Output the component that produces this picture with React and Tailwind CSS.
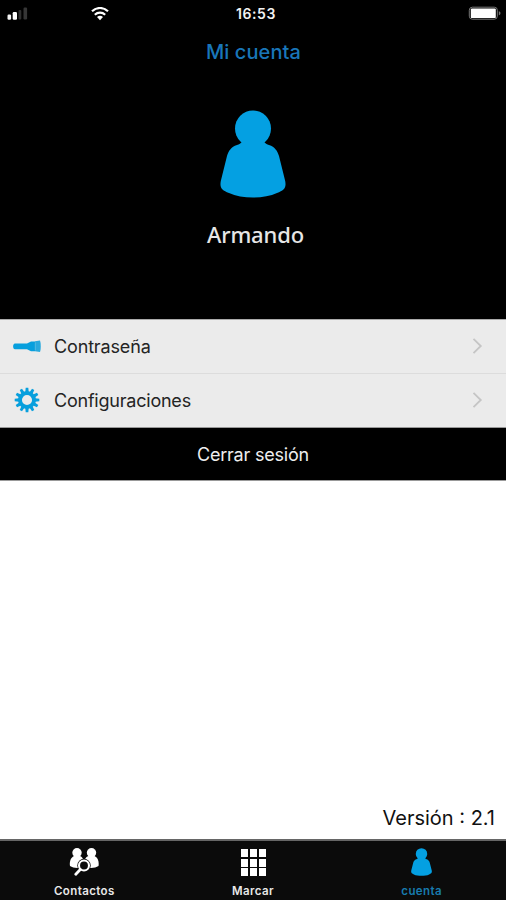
import React from "react";

const PersonIcon = ({ className }) => (
  <svg className={className} viewBox="0 0 66 88" fill="currentColor">
    <circle cx="33" cy="18.5" r="18" />
    <path d="M22 31.500C21 33.500 19 34.200 17 35C11 37 8.500 41 7 46L0.800 71C-0.500 78 2 80 9 83C22 89 44 89 57 83C64 80 66.500 78 65.200 71L59 46C57.500 41 55 37 49 35C47 34.200 45 33.500 44 31.500Z" />
  </svg>
);

const SignalIcon = () => (
  <svg className="h-[14px] w-[22px]" viewBox="0 0 22 14">
    <rect x="0.500" y="7.500" width="3.600" height="5.300" rx="1.200" fill="#f4f4f4" />
    <rect x="5.700" y="5" width="4.300" height="7.800" rx="1.200" fill="#fff" />
    <rect x="11.500" y="3" width="2.800" height="9.500" rx="1" fill="#303030" />
    <rect x="16.500" y="0.500" width="3.600" height="12" rx="1.200" fill="#363636" />
  </svg>
);

const WifiIcon = () => (
  <svg className="h-[14px] w-[18px]" viewBox="0 0 18 14" fill="none" stroke="#fff" strokeWidth="2.200">
    <path d="M1 4.300C5.500 -0.100 12.500 -0.100 17 4.300" />
    <path d="M3.800 7.700C6.800 5 11.200 5 14.200 7.700" />
    <path d="M6 10C8 8.300 10 8.300 12 10L9 13.200Z" fill="#fff" stroke="none" />
  </svg>
);

const BatteryIcon = () => (
  <svg className="h-[15px] w-[34px]" viewBox="0 0 34 15">
    <rect x="1.300" y="1.200" width="28" height="12" rx="3" fill="none" stroke="#777" strokeWidth="1" />
    <rect x="2.800" y="2.400" width="25" height="9.700" rx="1.200" fill="#fff" />
    <path d="M30.800 5.300C33 6 33 8.500 30.800 9.300Z" fill="#777" />
  </svg>
);

const KeyIcon = () => (
  <svg className="h-[14px] w-7" viewBox="0 0 28 14">
    <path d="M2 3.600H14L18 1.600H22V11.300H18L14 9.300H2C-0.500 9.300 -0.500 3.600 2 3.600Z" fill="#079fdd" />
    <path d="M22 1.300L27 0.600C28 3.300 28 9.300 27 12.100L22 11.300Z" fill="#29a9dd" />
    <path d="M22.300 2.300V10.300" stroke="#67bfe2" strokeWidth="0.700" />
  </svg>
);

const teeth = [0, 30, 60, 90, 120, 150, 180, 210, 240, 270, 300, 330];

const GearIcon = () => (
  <svg className="mb-[2px] h-[26px] w-[26px]" viewBox="-13 -13 26 26">
    <circle r="7" fill="none" stroke="#079fdd" strokeWidth="3.900" />
    {teeth.map((angle) => (
      <path
        key={angle}
        d="M-1.700 -8L-1.300 -12.300H1.300L1.700 -8Z"
        fill="#079fdd"
        transform={`rotate(${angle})`}
      />
    ))}
  </svg>
);

const ContactsIcon = () => (
  <svg className="h-7 w-[30px]" viewBox="0 0 30 28">
    <g fill="#fff">
      <circle cx="8" cy="4.800" r="4.700" />
      <path d="M5 8L11 8C14 9.500 15 12 15 18.500C11 20.500 4.500 20.500 1 18C0.300 14 1.500 9.500 5 8Z" />
      <circle cx="22.500" cy="4.800" r="4.700" />
      <path d="M19.500 8L25.500 8C29 9.500 30.200 14 29.500 18C26 20.500 19 20.500 15 18.500C15 12 16 9.500 19.500 8Z" />
    </g>
    <circle cx="15" cy="17.500" r="6.700" fill="#0b0b0b" />
    <path d="M11 22L6.500 26.500" stroke="#0b0b0b" strokeWidth="4.500" />
    <circle cx="15" cy="17.500" r="5" fill="#0b0b0b" stroke="#fff" strokeWidth="2.100" />
    <path d="M11.300 21.600L6.800 26.200" stroke="#fff" strokeWidth="2.800" strokeLinecap="round" />
  </svg>
);

const Chevron = () => (
  <svg className="mb-px h-[18px] w-[11px]" viewBox="0 0 11 18" fill="none" stroke="#c5c5c5" strokeWidth="1.800">
    <path d="M1.500 1.800L8.800 9L1.500 16.200" />
  </svg>
);

const MenuRow = ({ icon, label, labelClass }) => (
  <div className="flex h-full items-center pr-[23px] pl-[13px]">
    <div className="flex w-7 justify-center">{icon}</div>
    <span className={`ml-[13px] flex-1 text-[18px] text-[#242424] ${labelClass}`}>{label}</span>
    <Chevron />
  </div>
);

const Tab = ({ label, children, className }) => (
  <div className={`flex flex-1 flex-col items-center pt-[7px] ${className}`}>
    <div className="flex h-7 items-start justify-center">{children}</div>
    <span className="mt-[7px] text-[11.5px] leading-[16px] font-semibold tracking-[0.4px]">{label}</span>
  </div>
);

export default function App() {
  return (
    <div className="flex h-[900px] w-[506px] flex-col overflow-hidden bg-white font-['Inter',sans-serif]">
      <header className="flex h-[319px] flex-col items-center bg-black">
        <div className="grid h-[27px] w-full grid-cols-3 items-center pr-[4px] pl-[7px]">
          <div className="flex items-center gap-[62px]">
            <SignalIcon />
            <WifiIcon />
          </div>
          <span className="ml-[3px] text-center text-[14px] font-semibold tracking-[0.6px] text-[#f2f2f2]">16:53</span>
          <div className="flex justify-end">
            <BatteryIcon />
          </div>
        </div>
        <h1 className="mt-[11px] ml-px text-[20px] leading-[28px] font-medium tracking-[0.1px] text-[#1976b9]">
          Mi cuenta
        </h1>
        <PersonIcon className="mt-11 h-[88px] w-[66px] text-[#04a0e2]" />
        <p className="mt-[20px] ml-[5px] font-['Noto_Sans',sans-serif] text-[22px] leading-[32px] font-medium tracking-[-0.15px] text-[#e6e6e6]">
          Armando
        </p>
      </header>

      <div className="h-[54px] border-t border-[#aaa] bg-[#ebebeb]">
        <MenuRow icon={<KeyIcon />} label="Contraseña" labelClass="tracking-[-0.15px]" />
      </div>
      <div className="h-[54px] border-t border-[#dcdcdc] bg-[#ebebeb]">
        <MenuRow icon={<GearIcon />} label="Configuraciones" labelClass="tracking-[-0.22px]" />
      </div>
      <button className="h-[54px] border-y border-[#999] bg-black text-[18px] tracking-[-0.2px] text-[#eee]">
        Cerrar sesión
      </button>

      <main className="flex flex-1 items-end justify-end pr-[11px] pb-[7px]">
        <span className="text-[20px] leading-[28px] text-[#111]">Versión : 2.1</span>
      </main>

      <nav className="flex h-[61px] border-t-2 border-[#666] bg-[#0b0b0b]">
        <Tab label="Contactos" className="text-[#e8e8e8]">
          <ContactsIcon />
        </Tab>
        <Tab label="Marcar" className="text-[#e8e8e8]">
          <div className="mt-px grid grid-cols-3 gap-x-[2px] gap-y-[1.5px]">
            {teeth.slice(0, 9).map((n) => (
              <span key={n} className="h-[8px] w-[7px] bg-white" />
            ))}
          </div>
        </Tab>
        <Tab label="cuenta" className="text-[#187bae]">
          <PersonIcon className="h-7 w-[21px] text-[#04a0e2]" />
        </Tab>
      </nav>
    </div>
  );
}
